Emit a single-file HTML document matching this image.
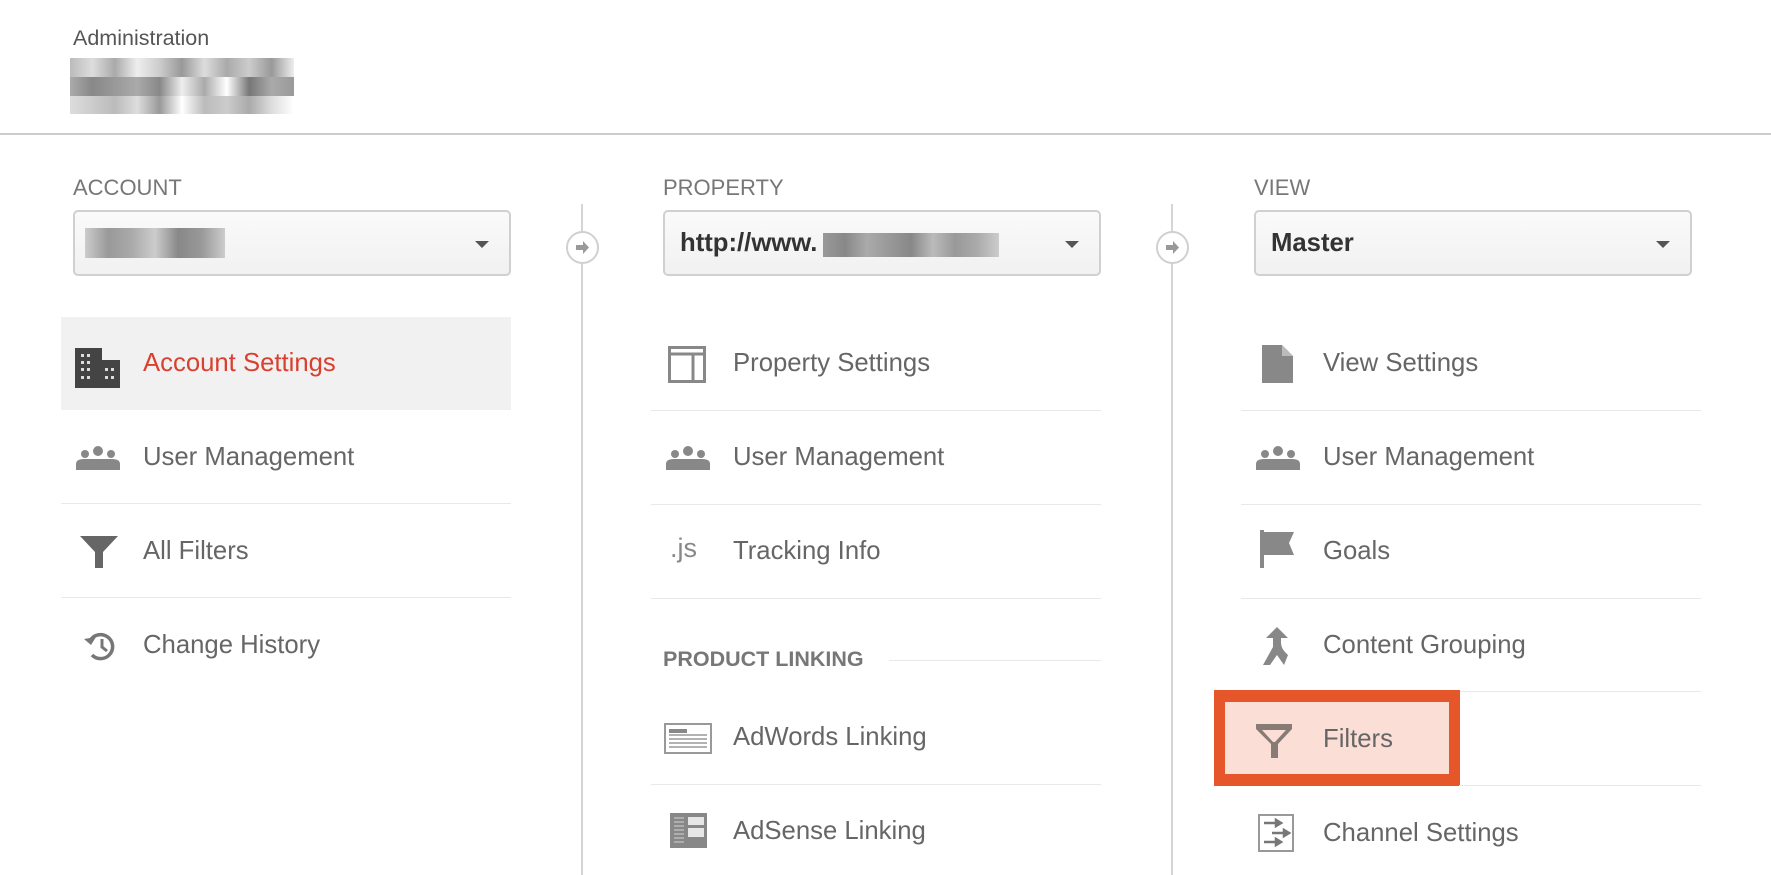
<!DOCTYPE html>
<html><head><meta charset="utf-8"><style>
*{margin:0;padding:0;box-sizing:border-box}
body{width:1771px;height:875px;background:#fff;position:relative;overflow:hidden;font-family:"Liberation Sans",Arial,sans-serif;color:#666}
.a{position:absolute}
.lbl{font-size:22px;color:#777}
.sel{position:absolute;height:66px;border:2px solid #d0d0d0;border-radius:5px;background:linear-gradient(#fafafa,#f1f1f1)}
.sel .car{position:absolute;right:20px;top:29px;width:0;height:0;border-left:7px solid transparent;border-right:7px solid transparent;border-top:7px solid #555}
.t{position:absolute;font-size:25.7px;line-height:30px;color:#666;white-space:nowrap}
.sep{position:absolute;height:1px;background:#e8e8e8}
.vl{position:absolute;width:2px;background:#d5d5d5;top:204px;height:671px}
.circ{position:absolute;width:33px;height:33px;border:2px solid #d0d0d0;border-radius:50%;background:#fff}
</style></head><body>
<div class="a" style="left:73px;top:26px;font-size:21.5px;color:#555">Administration</div>
<div class="a" style="left:70px;top:58px;width:224px;height:19px;background:linear-gradient(90deg,#bbb,#ddd,#aaa,#eee,#ccc,#999,#ddd,#aaa,#ccc,#999,#eee)"></div>
<div class="a" style="left:70px;top:77px;width:224px;height:19px;background:linear-gradient(90deg,#aaa,#888,#999,#aaa,#888,#eee,#aaa,#fff,#777,#aaa,#999)"></div>
<div class="a" style="left:70px;top:96px;width:224px;height:18px;background:linear-gradient(90deg,#ddd,#ccc,#bbb,#ddd,#999,#fff,#bbb,#ccc,#aaa,#ddd,#fff)"></div>
<div class="a" style="left:0;top:133px;width:1771px;height:2px;background:#ccc"></div>

<div class="a lbl" style="left:73px;top:175px">ACCOUNT</div>
<div class="a lbl" style="left:663px;top:175px">PROPERTY</div>
<div class="a lbl" style="left:1254px;top:175px">VIEW</div>

<div class="sel" style="left:73px;top:210px;width:438px"><div class="a" style="left:10px;top:16px;width:140px;height:30px;background:linear-gradient(90deg,#ccc,#999,#aaa,#ccc,#888,#999,#ccc)"></div><div class="car"></div></div>
<div class="sel" style="left:663px;top:210px;width:438px"><div class="a" style="left:15px;top:17px;font-size:25.7px;font-weight:bold;color:#333">http://www.</div><div class="a" style="left:158px;top:21px;width:176px;height:24px;background:linear-gradient(90deg,#999,#888,#aaa,#999,#888,#bbb,#999,#aaa,#ccc)"></div><div class="car"></div></div>
<div class="sel" style="left:1254px;top:210px;width:438px"><div class="a" style="left:15px;top:17px;font-size:25.7px;font-weight:bold;color:#333">Master</div><div class="car"></div></div>

<div class="vl" style="left:581px"></div>
<div class="vl" style="left:1171px"></div>
<div class="circ" style="left:566px;top:231px"><svg width="29" height="29" viewBox="0 0 29 29"><path d="M8 12h7v-4l6 6.5-6 6.5v-4H8z" fill="#999"/></svg></div>
<div class="circ" style="left:1156px;top:231px"><svg width="29" height="29" viewBox="0 0 29 29"><path d="M8 12h7v-4l6 6.5-6 6.5v-4H8z" fill="#999"/></svg></div>

<div class="a" style="left:61px;top:317px;width:450px;height:93px;background:#f1f1f1"></div>
<svg class="a" style="left:75px;top:348px" width="45" height="40" viewBox="0 0 45 40"><path d="M0 0h27v12h18v28H0z" fill="#444"/><g fill="#ddd"><rect x="6" y="6" width="3" height="3"/><rect x="12" y="6" width="3" height="3"/><rect x="6" y="13" width="3" height="3"/><rect x="12" y="13" width="3" height="3"/><rect x="6" y="20" width="3" height="3"/><rect x="12" y="20" width="3" height="3"/><rect x="6" y="28" width="3" height="3"/><rect x="12" y="28" width="3" height="3"/><rect x="30" y="20" width="3" height="3"/><rect x="36" y="20" width="3" height="3"/><rect x="30" y="28" width="3" height="3"/><rect x="36" y="28" width="3" height="3"/></g></svg>
<div class="t" style="left:143px;top:348px;color:#d8412f">Account Settings</div>

<svg class="a" style="left:76px;top:446px" width="44" height="24" viewBox="0 0 44 24"><g fill="#888"><circle cx="22" cy="5" r="5"/><circle cx="9" cy="8" r="4"/><circle cx="35" cy="8" r="4"/><path d="M0 24v-6q0-5 8-5h28q8 0 8 5v6z"/></g></svg>
<div class="t" style="left:143px;top:442px">User Management</div>
<div class="sep" style="left:61px;top:503px;width:450px"></div>
<svg class="a" style="left:80px;top:536px" width="38" height="32" viewBox="0 0 38 32"><path d="M0 0h38L23 16v16h-8V16z" fill="#666"/></svg>
<div class="t" style="left:143px;top:536px">All Filters</div>
<div class="sep" style="left:61px;top:597px;width:450px"></div>
<svg class="a" style="left:83px;top:629px" width="34" height="34" viewBox="0 0 34 34"><path d="M7 12A12 12 0 1 1 9 26" stroke="#777" stroke-width="3.5" fill="none"/><path d="M1 10l7 6 5-8z" fill="#777"/><path d="M19 10v8l5 4" stroke="#777" stroke-width="3" fill="none"/></svg>
<div class="t" style="left:143px;top:630px">Change History</div>

<svg class="a" style="left:668px;top:346px" width="38" height="37" viewBox="0 0 38 37"><rect x="1.5" y="1.5" width="35" height="34" fill="none" stroke="#888" stroke-width="3"/><path d="M1.5 8h35M25 8v28" stroke="#888" stroke-width="3"/></svg>
<div class="t" style="left:733px;top:348px">Property Settings</div>
<div class="sep" style="left:651px;top:410px;width:450px"></div>
<svg class="a" style="left:666px;top:446px" width="44" height="24" viewBox="0 0 44 24"><g fill="#888"><circle cx="22" cy="5" r="5"/><circle cx="9" cy="8" r="4"/><circle cx="35" cy="8" r="4"/><path d="M0 24v-6q0-5 8-5h28q8 0 8 5v6z"/></g></svg>
<div class="t" style="left:733px;top:442px">User Management</div>
<div class="sep" style="left:651px;top:504px;width:450px"></div>
<div class="a" style="left:670px;top:533px;font-size:27px;color:#888">.js</div>
<div class="t" style="left:733px;top:536px">Tracking Info</div>
<div class="sep" style="left:651px;top:598px;width:450px"></div>
<div class="a" style="left:663px;top:647px;font-size:21.5px;font-weight:bold;color:#777">PRODUCT LINKING</div>
<div class="sep" style="left:889px;top:660px;width:212px"></div>
<svg class="a" style="left:664px;top:723px" width="48" height="31" viewBox="0 0 48 31"><rect x="1" y="1" width="46" height="29" fill="none" stroke="#999" stroke-width="2"/><rect x="5" y="6" width="18" height="4" fill="#888"/><path d="M5 12h38M5 16h38M5 20h38M5 24h38" stroke="#999" stroke-width="1.5"/></svg>
<div class="t" style="left:733px;top:722px">AdWords Linking</div>
<div class="sep" style="left:651px;top:784px;width:450px"></div>
<svg class="a" style="left:670px;top:813px" width="37" height="35" viewBox="0 0 37 35"><rect width="37" height="35" fill="#888"/><g fill="#e6e6e6"><rect x="18" y="4" width="16" height="8"/><rect x="18" y="15" width="16" height="9"/><path d="M4 5h10M4 9h10M4 13h10M4 17h10M4 21h10M4 25h10M4 29h10" stroke="#bbb" stroke-width="1.5"/></g></svg>
<div class="t" style="left:733px;top:816px">AdSense Linking</div>

<svg class="a" style="left:1262px;top:345px" width="31" height="38" viewBox="0 0 31 38"><path d="M0 0h20l11 11v27H0z" fill="#888"/><path d="M20 0v11h11z" fill="#bbb"/></svg>
<div class="t" style="left:1323px;top:348px">View Settings</div>
<div class="sep" style="left:1241px;top:410px;width:460px"></div>
<svg class="a" style="left:1256px;top:446px" width="44" height="24" viewBox="0 0 44 24"><g fill="#888"><circle cx="22" cy="5" r="5"/><circle cx="9" cy="8" r="4"/><circle cx="35" cy="8" r="4"/><path d="M0 24v-6q0-5 8-5h28q8 0 8 5v6z"/></g></svg>
<div class="t" style="left:1323px;top:442px">User Management</div>
<div class="sep" style="left:1241px;top:504px;width:460px"></div>
<svg class="a" style="left:1260px;top:530px" width="36" height="38" viewBox="0 0 36 38"><path d="M0 0h4v38H0z" fill="#888"/><path d="M4 2h30l-5 11 5 12H4z" fill="#888"/></svg>
<div class="t" style="left:1323px;top:536px">Goals</div>
<div class="sep" style="left:1241px;top:598px;width:460px"></div>
<svg class="a" style="left:1262px;top:627px" width="30" height="38" viewBox="0 0 30 38"><path d="M15 0l11 11h-7v5q0 6 7 12l-4 10q-7-10-7-10l-7 10H1L11 20v-9H4z" fill="#888"/></svg>
<div class="t" style="left:1323px;top:630px">Content Grouping</div>
<div class="sep" style="left:1241px;top:691px;width:460px"></div>

<div class="a" style="left:1214px;top:690px;width:246px;height:96px;background:#e5572a"></div>
<div class="a" style="left:1225px;top:702px;width:224px;height:72px;background:#fbdfd6"></div>
<svg class="a" style="left:1256px;top:724px" width="36" height="34" viewBox="0 0 36 34"><path d="M0 0h36v5L22 20v14h-7V20L0 5z" fill="#887a74"/><path d="M6 6h24L19 18h-2z" fill="#fbdfd6"/></svg>
<div class="t" style="left:1323px;top:724px">Filters</div>
<div class="sep" style="left:1459px;top:785px;width:242px"></div>

<svg class="a" style="left:1258px;top:814px" width="36" height="38" viewBox="0 0 36 38"><rect x="1" y="1" width="34" height="36" fill="none" stroke="#999" stroke-width="2"/><g stroke="#777" stroke-width="2.5" fill="#777"><path d="M6 9h12"/><path d="M18 6l5 3-5 3z"/><path d="M14 19h12"/><path d="M26 16l5 3-5 3z"/><path d="M6 28h12"/><path d="M18 25l5 3-5 3z"/></g></svg>
<div class="t" style="left:1323px;top:818px">Channel Settings</div>
</body></html>
